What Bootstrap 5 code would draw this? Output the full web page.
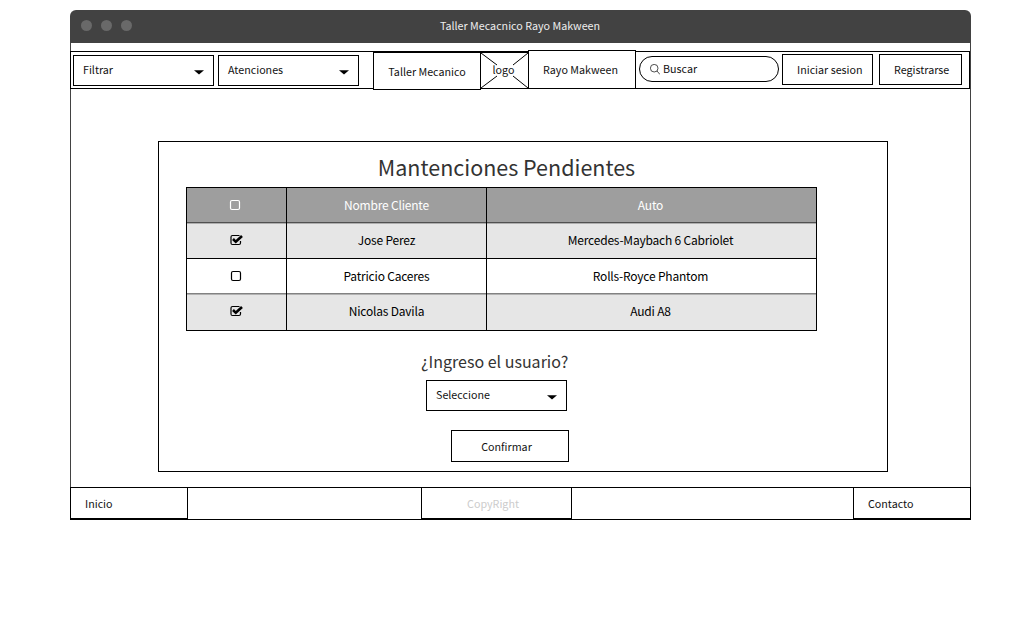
<!DOCTYPE html>
<html lang="es">
<head>
<meta charset="utf-8">
<meta name="viewport" content="width=device-width, initial-scale=1">
<title>Taller Mecacnico Rayo Makween</title>
<link href="https://cdn.jsdelivr.net/npm/bootstrap@5.3.0/dist/css/bootstrap.min.css" rel="stylesheet">
<style>
  body { font-family: "Noto Sans CJK SC", "Noto Sans", sans-serif; font-size: 10.72px; line-height: 16px; color: #111; background: #fff; }
  .app-window { width: 901px; margin: 10px 0 0 70px; }
  .title-bar { height: 33px; background: #424242; color: #eee; border-radius: 6px 6px 0 0; display: grid; grid-template-columns: 1fr auto 1fr; }
  .title-text { padding: 8px 1px 0 0; }
  .dots { gap: 9px; padding: 9.5px 0 0 11px; }
  .dots i { width: 11px; height: 11px; border-radius: 50%; background: #696969; }
  .app-body { border: solid #424242; border-width: 0 1px; padding-top: 8px; }
  .line-box { border: 1px solid #000; background: #fff; border-radius: 0; }
  .top-nav { height: 38px; width: 900px; margin-left: -1px; padding-left: 2px; }
  .pick { width: 141px; height: 31px; padding: 0 9px 1px; font-size: inherit; }
  .pick svg { margin-top: 5px; }
  .first-pick { margin-top: 3px; }
  .second-pick { margin: 3px 14px 0 4px; }
  .brand-box { width: 108px; height: 38px; padding-top: 2px; }
  .brand-tall { height: 39px; margin-top: -2px; padding: 0 3px 0 0; }
  .logo-box { width: 49px; height: 37px; margin: 0 -1px; }
  .logo-box svg { display: block; }
  .logo-box span { position: absolute; left: 0; right: 2px; top: 9px; text-align: center; }
  .search-box { width: 140px; height: 26px; border-radius: 13px; padding: 0 0 1px 10px; margin: 4px 0 0 3px; }
  .search-box svg { margin: 2px 3px 0 0; }
  .nav-btn { height: 31px; margin-top: 2px; padding: 0 0 0 14px; font-size: inherit; }
  .login { width: 91px; margin-left: 3px; }
  .signup { width: 83px; margin-left: 6px; }
  .panel { width: 730px; height: 331px; margin: 52px 0 15px 87px; padding: 7px 0 0 27px; }
  .panel h1 { font-size: 21.5px; line-height: 36px; width: 641px; margin: 0 0 2px; font-weight: 400; color: #333; text-align: center; }
  .panel h2 { font-size: 16px; line-height: 24px; font-weight: 400; color: #333; margin: 18px 0 7px; padding-left: 235px; }
  .jobs { display: grid; grid-template-columns: 99px 199px 329px; gap: 0 1px; background: #000; border: 1px solid #000; width: 631px; font-size: 12px; letter-spacing: -.2px; color: #000; }
  .jobs > div { display: flex; align-items: center; justify-content: center; background: #e6e6e6; height: 34px; }
  .jobs > div:nth-child(3n) { padding-right: 2px; }
  .jobs > .hd { background: #9e9e9e; color: #fff; }
  .jobs > .r1 { border-top: 1px solid #505050; box-shadow: inset 0 1px #aeaeae; border-bottom: 1px solid #000; height: 37px; padding-bottom: 1px; }
  .jobs > .r2 { background: #fff; }
  .jobs > .r3 { border-top: 1px solid #828282; box-shadow: inset 0 1px #b2b2b2; height: 37px; padding-bottom: 2px; }
  .jobs svg { margin-right: 1px; }
  .jobs .hd svg { margin: 0 3px 0 0; }
  .ask { margin-left: 240px; }
  .confirm { width: 118px; height: 32px; margin: 19px 0 0 265px; padding: 2px 7px 0 0; font-size: inherit; }
  .foot { height: 33px; margin: 0 -1px; }
  .foot > div { height: 32px; margin-top: -1px; line-height: 31px; }
  .foot-link { width: 118px; padding-left: 14px; }
  .foot-link:first-child { margin-left: -1px; }
  .foot-link:last-child { margin-right: -1px; }
  .foot-mid { width: 151px; color: #ccc; padding-right: 7px; margin-right: 48px; }
</style>
</head>
<body>
<div class="app-window">
  <header class="title-bar">
    <div class="dots d-flex"><i></i><i></i><i></i></div>
    <div class="title-text">Taller Mecacnico Rayo Makween</div>
  </header>
  <div class="app-body">
    <nav class="top-nav line-box d-flex align-items-start">
      <div class="pick first-pick line-box d-flex align-items-center justify-content-between">Filtrar <svg width="10" height="5"><path d="M0 .3H10L5 4.6Z"/></svg></div>
      <div class="pick second-pick line-box d-flex align-items-center justify-content-between">Atenciones <svg width="10" height="5"><path d="M0 .3H10L5 4.6Z"/></svg></div>
      <div class="brand-box line-box d-flex align-items-center justify-content-center">Taller Mecanico</div>
      <div class="logo-box line-box position-relative"><svg width="47" height="35" stroke="#000" fill="none"><path d="M0 0L16 12M47 0L32 12M0 35L16 23M47 35L32 23"/></svg><span>logo</span></div>
      <div class="brand-box brand-tall line-box d-flex align-items-center justify-content-center">Rayo Makween</div>
      <div class="search-box line-box d-flex align-items-center"><svg width="10" height="11" fill="none" stroke="#222" stroke-width=".8"><circle cx="4.2" cy="4.2" r="3.8"/><path d="M7 7L10 10.5"/></svg>Buscar</div>
      <div class="nav-btn login line-box d-flex align-items-center">Iniciar sesion</div>
      <div class="nav-btn signup line-box d-flex align-items-center">Registrarse</div>
    </nav>
    <main class="panel line-box">
      <h1>Mantenciones Pendientes</h1>
      <div class="jobs">
        <div class="hd"><svg width="12" height="12" fill="none" stroke="#fff" stroke-width="1.2"><rect x="1.5" y="1.5" width="9" height="9" rx="1.5"/></svg></div><div class="hd">Nombre Cliente</div><div class="hd">Auto</div>
        <div class="r1"><svg width="13" height="12" fill="none" stroke="#000"><path d="M10.5 7V9Q10.5 10.5 9 10.5H2.5Q1 10.5 1 9V3Q1 1.5 2.5 1.5H9.5" stroke-width="1.2"/><path d="M3 5L5.8 7.8L12 2" stroke-width="2.6"/></svg></div><div class="r1">Jose Perez</div><div class="r1">Mercedes-Maybach 6 Cabriolet</div>
        <div class="r2"><svg width="12" height="12" fill="none" stroke="#000" stroke-width="1.2"><rect x="1.5" y="1.5" width="9" height="9" rx="1.5"/></svg></div><div class="r2">Patricio Caceres</div><div class="r2">Rolls-Royce Phantom</div>
        <div class="r3"><svg width="13" height="12" fill="none" stroke="#000"><path d="M10.5 7V9Q10.5 10.5 9 10.5H2.5Q1 10.5 1 9V3Q1 1.5 2.5 1.5H9.5" stroke-width="1.2"/><path d="M3 5L5.8 7.8L12 2" stroke-width="2.6"/></svg></div><div class="r3">Nicolas Davila</div><div class="r3">Audi A8</div>
      </div>
      <h2>¿Ingreso el usuario?</h2>
      <div class="pick ask line-box d-flex align-items-center justify-content-between">Seleccione <svg width="10" height="5"><path d="M0 .3H10L5 4.6Z"/></svg></div>
      <div class="confirm line-box d-flex align-items-center justify-content-center">Confirmar</div>
    </main>
    <footer class="foot line-box d-flex justify-content-between">
      <div class="foot-link line-box">Inicio</div>
      <div class="foot-mid line-box text-center">CopyRight</div>
      <div class="foot-link line-box">Contacto</div>
    </footer>
  </div>
</div>
<script src="https://cdn.jsdelivr.net/npm/bootstrap@5.3.0/dist/js/bootstrap.bundle.min.js"></script>
</body>
</html>
